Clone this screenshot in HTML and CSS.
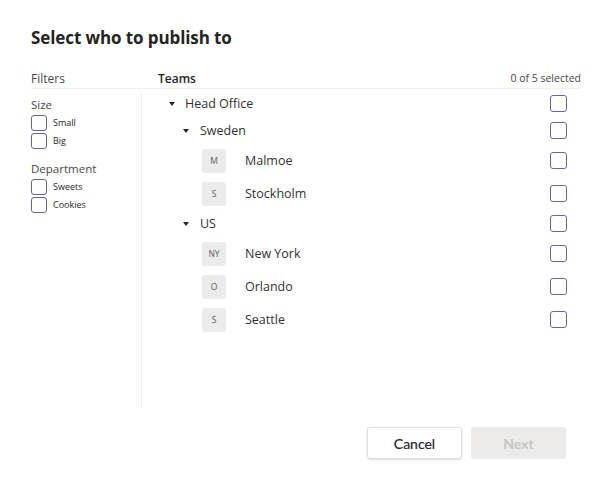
FILE: index.html
```html
<!DOCTYPE html>
<html lang="en">
<head>
<meta charset="utf-8">
<title>Select who to publish to</title>
<link rel="stylesheet" href="styles.css">
</head>
<body>
<div class="dialog">
  <h1 class="title">Select who to publish to</h1>
  <div class="head">
    <div class="head-filters">Filters</div>
    <div class="head-teams">Teams</div>
    <div class="head-count">0 of 5 selected</div>
  </div>
  <div class="body">
    <div class="filters">
      <div class="group-label">Size</div>
      <label class="fcheck"><span class="box"></span><span class="flabel">Small</span></label>
      <label class="fcheck"><span class="box"></span><span class="flabel">Big</span></label>
      <div class="group-label dept">Department</div>
      <label class="fcheck"><span class="box"></span><span class="flabel">Sweets</span></label>
      <label class="fcheck"><span class="box"></span><span class="flabel">Cookies</span></label>
    </div>
    <div class="tree">
      <div class="row group lvl0"><span class="caret"></span><span class="name">Head Office</span><span class="cbox"></span></div>
      <div class="row group lvl1"><span class="caret"></span><span class="name">Sweden</span><span class="cbox"></span></div>
      <div class="row leaf"><span class="avatar">M</span><span class="name">Malmoe</span><span class="cbox"></span></div>
      <div class="row leaf"><span class="avatar">S</span><span class="name">Stockholm</span><span class="cbox"></span></div>
      <div class="row group lvl1"><span class="caret"></span><span class="name">US</span><span class="cbox"></span></div>
      <div class="row leaf"><span class="avatar">NY</span><span class="name">New York</span><span class="cbox"></span></div>
      <div class="row leaf"><span class="avatar">O</span><span class="name">Orlando</span><span class="cbox"></span></div>
      <div class="row leaf"><span class="avatar">S</span><span class="name">Seattle</span><span class="cbox"></span></div>
    </div>
  </div>
  <div class="footer">
    <button class="btn cancel">Cancel</button>
    <button class="btn next" disabled>Next</button>
  </div>
</div>
</body>
</html>
```

FILE: styles.css
```css
* { box-sizing: border-box; }
html, body { margin: 0; padding: 0; background: #fff; }
body {
  font-family: "Open Sans", "Noto Sans", sans-serif;
  color: #252423;
  width: 599px;
  height: 497px;
  overflow: hidden;
}
.dialog {
  padding: 26px 18px 0 31px;
}
.title {
  margin: 0;
  font-size: 17px;
  line-height: 24px;
  font-weight: 700;
  letter-spacing: -0.1px;
}
.head {
  display: flex;
  align-items: center;
  margin-top: 17px;
  height: 22px;
  padding-top: 1px;
  border-bottom: 1px solid #f0f0f0;
}
.head-filters {
  width: 127px;
  font-size: 12px;
  color: #484644;
}
.head-teams {
  flex: 1;
  font-size: 12px;
  font-weight: 600;
}
.head-count {
  font-size: 10.5px;
  color: #484644;
}
.body {
  display: flex;
  height: 319px;
}
.filters {
  width: 111px;
  border-right: 1px solid #f0f0f0;
  margin-top: 3px;
  padding-top: 5px;
}
.group-label {
  font-size: 11.5px;
  line-height: 16px;
  color: #484644;
}
.group-label.dept { margin-top: 12px; }
.fcheck {
  display: flex;
  align-items: center;
  height: 17px;
  margin-top: 1px;
}
.box {
  width: 16px;
  height: 16px;
  border: 1px solid #6264a7;
  border-radius: 3px;
}
.flabel {
  font-size: 9px;
  margin-left: 6px;
  color: #252423;
}
.tree {
  flex: 1;
  padding-top: 1px;
}
.row {
  display: flex;
  align-items: center;
  padding-right: 14px;
}
.row.group { height: 27px; }
.row.leaf { height: 33px; padding-left: 60px; }
.row.lvl0 { padding-left: 27px; }
.row.lvl1 { padding-left: 41px; }
.caret {
  width: 0;
  height: 0;
  border-left: 3.5px solid transparent;
  border-right: 3.5px solid transparent;
  border-top: 4px solid #252423;
  margin-right: 10px;
}
.lvl1 .caret { margin-right: 11px; }
.name {
  flex: 1;
  font-size: 12.5px;
  color: #323130;
}
.avatar {
  width: 24px;
  height: 24px;
  border-radius: 3px;
  background: #ebebeb;
  color: #605e5c;
  font-size: 8.5px;
  display: flex;
  align-items: center;
  justify-content: center;
  margin-right: 19px;
}
.cbox {
  width: 17px;
  height: 17px;
  border: 1px solid #6264a7;
  border-radius: 3px;
}
.footer {
  display: flex;
  justify-content: flex-end;
  gap: 9px;
  margin-top: 19px;
  padding-right: 15px;
}
.btn {
  width: 95px;
  height: 32px;
  border-radius: 3px;
  font-family: "Lato", "Open Sans", sans-serif;
  font-size: 14px;
  font-weight: 700;
  padding: 0;
}
.cancel {
  background: #fff;
  border: 1px solid #e1dfdd;
  color: #252423;
  box-shadow: 0 1px 2px rgba(0,0,0,0.12);
  font-weight: 400;
  -webkit-text-stroke: 0.2px #252423;
}
.next {
  background: #edebe9;
  border: none;
  color: #c8c6c4;
}
```
